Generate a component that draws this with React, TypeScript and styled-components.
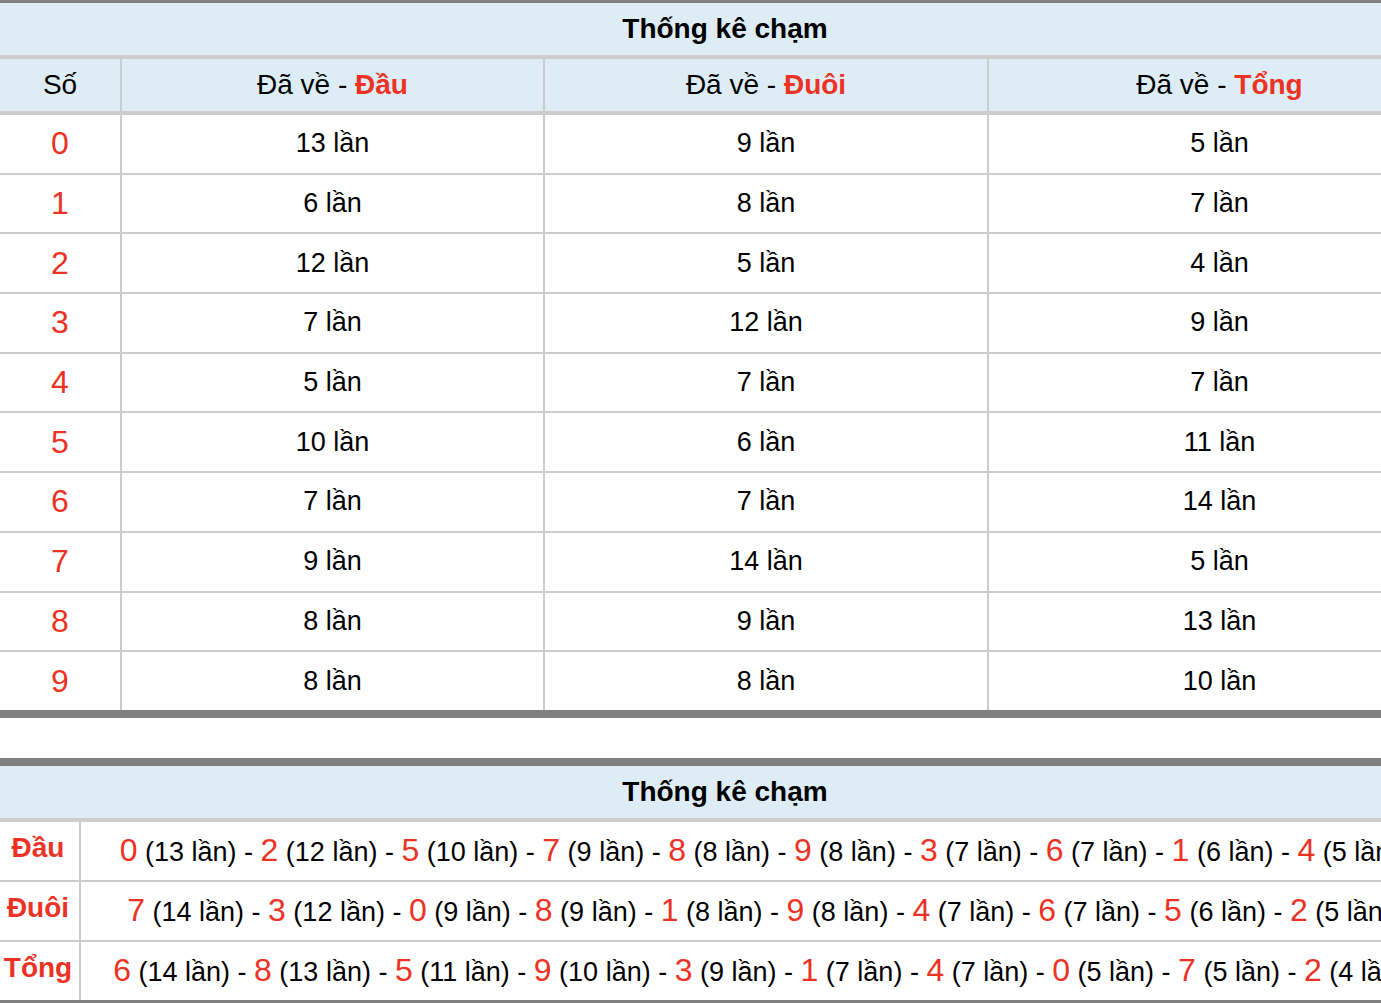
import styled, { createGlobalStyle } from 'styled-components';

const GlobalStyle = createGlobalStyle`
  html, body {
    margin: 0;
    padding: 0;
    overflow: hidden;
    background: #fff;
  }
  body {
    font-family: "Liberation Sans", Arial, Helvetica, sans-serif;
    color: #000;
  }
`;

const RED = '#ec3224';

const dau = [13, 6, 12, 7, 5, 10, 7, 9, 8, 8];
const duoi = [9, 8, 5, 12, 7, 6, 7, 14, 9, 8];
const tong = [5, 7, 4, 9, 7, 11, 14, 5, 13, 10];

const ranking = (counts: number[]) =>
  counts
    .map((count, digit) => ({ digit, count }))
    .sort((a, b) => b.count - a.count || a.digit - b.digit);

const summaryRows = [
  { label: 'Đầu', items: ranking(dau) },
  { label: 'Đuôi', items: ranking(duoi) },
  { label: 'Tổng', items: ranking(tong) },
];

const App = () => {
  return (
    <>
      <GlobalStyle />
      <Page>
        <Table $topBorder={3}>
          <colgroup>
            <Col $width={122} />
            <Col $width={423} />
            <Col $width={444} />
            <Col $width={461} />
          </colgroup>
          <thead>
            <tr>
              <Title colSpan={4}>Thống kê chạm</Title>
            </tr>
            <tr>
              <HeadCell>Số</HeadCell>
              <HeadCell>
                Đã về - <Accent>Đầu</Accent>
              </HeadCell>
              <HeadCell>
                Đã về - <Accent>Đuôi</Accent>
              </HeadCell>
              <HeadCell $last>
                Đã về - <Accent>Tổng</Accent>
              </HeadCell>
            </tr>
          </thead>
          <tbody>
            {dau.map((_, digit) => {
              const last = digit === dau.length - 1;
              return (
                <tr key={digit}>
                  <Cell $lastRow={last}>
                    <Digit>{digit}</Digit>
                  </Cell>
                  <Cell $lastRow={last}>{dau[digit]} lần</Cell>
                  <Cell $lastRow={last}>{duoi[digit]} lần</Cell>
                  <Cell $lastRow={last} $last>
                    {tong[digit]} lần
                  </Cell>
                </tr>
              );
            })}
          </tbody>
        </Table>

        <Table $topBorder={8}>
          <colgroup>
            <Col $width={81} />
            <Col $width={1369} />
          </colgroup>
          <thead>
            <tr>
              <Title colSpan={2}>Thống kê chạm</Title>
            </tr>
          </thead>
          <tbody>
            {summaryRows.map((row, i) => {
              const last = i === summaryRows.length - 1;
              return (
                <tr key={row.label}>
                  <LabelCell $lastRow={last}>{row.label}</LabelCell>
                  <SummaryCell $lastRow={last} $last>
                    <Line>
                      {row.items.map((item, j) => (
                        <span key={item.digit}>
                          <Digit>{item.digit}</Digit> ({item.count} lần)
                          {j < row.items.length - 1 ? ' - ' : ''}
                        </span>
                      ))}
                    </Line>
                  </SummaryCell>
                </tr>
              );
            })}
          </tbody>
        </Table>
      </Page>
    </>
  );
};

export default App;

const Page = styled.div`
  display: flex;
  flex-direction: column;
  gap: 40px;
  width: 1450px;
`;

const Table = styled.table<{ $topBorder: number }>`
  width: 1450px;
  table-layout: fixed;
  border-collapse: separate;
  border-spacing: 0;
  border-top: ${({ $topBorder }) => $topBorder}px solid #808080;
  border-bottom: 8px solid #808080;
`;

const Col = styled.col<{ $width: number }>`
  width: ${({ $width }) => $width}px;
`;

const Title = styled.th`
  height: 52px;
  padding: 0;
  background: #ddecf5;
  border-bottom: 4px solid #cccccc;
  font-size: 28px;
  font-weight: bold;
  text-align: center;
  vertical-align: middle;
`;

const HeadCell = styled.th<{ $last?: boolean }>`
  height: 52px;
  padding: 0;
  background: #ddecf5;
  border-bottom: 4px solid #cccccc;
  border-right: ${({ $last }) => ($last ? 'none' : '2px solid #cccccc')};
  font-size: 28px;
  font-weight: normal;
  text-align: center;
  vertical-align: middle;
`;

const Accent = styled.b`
  color: ${RED};
  font-weight: bold;
`;

const Cell = styled.td<{ $last?: boolean; $lastRow?: boolean }>`
  height: 57.7px;
  padding: 0;
  border-bottom: ${({ $lastRow }) => ($lastRow ? 'none' : '2px solid #cccccc')};
  border-right: ${({ $last }) => ($last ? 'none' : '2px solid #cccccc')};
  font-size: 27px;
  text-align: center;
  vertical-align: middle;
  white-space: nowrap;
`;

const SummaryCell = styled(Cell)`
  height: 58px;
  padding-right: 12px;
`;

const LabelCell = styled(Cell)`
  height: 52px;
  padding: 0 3px 6px 0;
  color: ${RED};
  font-size: 28px;
  font-weight: bold;
`;

const Digit = styled.span`
  color: ${RED};
  font-size: 32px;
`;

const Line = styled.div`
  white-space: nowrap;
  display: flex;
  justify-content: center;
  align-items: baseline;
  & > span {
    white-space: pre;
  }
`;
